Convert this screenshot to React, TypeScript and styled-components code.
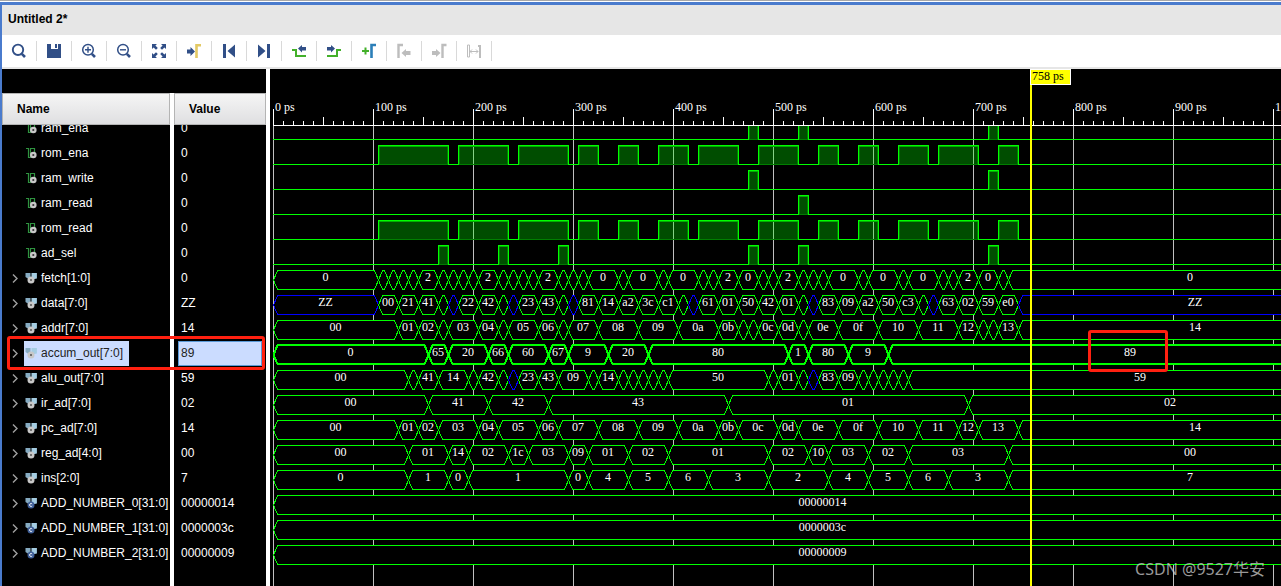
import React from "react";
import styled, { createGlobalStyle } from "styled-components";

const NAVY = "#314f87";
const LEAF = "#43b02a";
const MUTED = "#bdbdbd";
const WAVE = "#00ff00";
const HIGH_Z = "#0000ff";
/* Simulation end, in picoseconds; one picosecond is one pixel wide. */
const END = 1099;
const ORIGIN = 3;

const GlobalStyle = createGlobalStyle`
  * { box-sizing: border-box; }
  body { margin: 0; background: #fff; font: 12px "Liberation Sans", Arial, sans-serif; }
  button { font: inherit; background: none; border: 0; padding: 0; cursor: pointer; }
`;

const Frame = styled.div`
  display: flex;
  flex-direction: column;
  min-height: 100vh;
  border-top: 1px solid #a8a8a8;
  padding-top: 1px;
`;

const Window = styled.main`
  flex: 1;
  display: flex;
  flex-direction: column;
  border-top: 3px solid #4a7bcd;
  border-left: 2px solid #4a7bcd;
`;

const TitleBar = styled.h1`
  margin: 0;
  padding: 0 6px 2px;
  height: 30px;
  line-height: 28px;
  font-size: 12px;
  background: #e6e6e6;
  color: #000;
`;

const Toolbar = styled.div`
  display: flex;
  align-items: center;
  height: 34px;
  border-bottom: 2px solid #e6e6e6;
  background: #fff;
`;

const ToolButton = styled.button`
  display: flex;
  align-items: center;
  justify-content: center;
  width: 35px;
  height: 20px;
  border-right: 1px solid #d9d9d9;
`;

const Workspace = styled.div`
  position: relative;
  flex: 1;
  display: flex;
  background: #000;
  overflow: hidden;
`;

const SignalPane = styled.section`
  flex: 0 0 268px;
  display: flex;
  flex-direction: column;
  padding-top: 24px;
  border-right: 4px solid #fff;
`;

const SignalList = styled.div`
  flex: 1;
  background: linear-gradient(to right, #000 168px, #fff 168px, #fff 172px, #000 172px);
`;

const SignalTable = styled.table`
  width: 100%;
  table-layout: fixed;
  border-spacing: 0;
  color: #fff;
  td { padding: 0; }
`;

const NameColumn = styled.col`
  width: 172px;
`;

const HeadCell = styled.th<{ $gutter?: boolean }>`
  padding: 0;
  text-align: left;
  border-right: ${(p) => (p.$gutter ? "4px solid #fff" : "0")};
`;

const HeadLabel = styled.div<{ $indent: number }>`
  height: 32px;
  line-height: 30px;
  padding-left: ${(p) => p.$indent}px;
  border: 1px solid #b4b4b4;
  background: linear-gradient(#f5f5f5, #dfdfe1);
  color: #000;
`;

const Cell = styled.div<{ $cut?: boolean; $end?: number }>`
  display: flex;
  align-items: flex-end;
  height: ${(p) => (p.$cut ? 16 : 25)}px;
  padding-right: ${(p) => p.$end ?? 0}px;
  overflow: hidden;
`;

const Expander = styled.button`
  flex: none;
  display: flex;
  align-items: center;
  width: 12px;
  height: 25px;
  margin-left: 10px;
  padding-bottom: 2px;
`;

const NameChip = styled.span<{ $selected?: boolean }>`
  display: flex;
  align-items: center;
  gap: 2px;
  height: 25px;
  padding: 0 6px 2px 1px;
  white-space: nowrap;
  background: ${(p) => (p.$selected ? "#cbdcff" : "transparent")};
  color: ${(p) => (p.$selected ? "#222" : "#fff")};
  svg { flex: none; }
`;

const ValueBox = styled.span<{ $selected?: boolean }>`
  flex: 1;
  height: 25px;
  line-height: 23px;
  margin-left: 4px;
  padding-left: 2px;
  border: 1px solid ${(p) => (p.$selected ? "#5a9ad8" : "transparent")};
  background: ${(p) => (p.$selected ? "#cbdcff" : "transparent")};
  color: ${(p) => (p.$selected ? "#222" : "#fff")};
`;

const WavePane = styled.section`
  position: relative;
  flex: 1;
  min-width: 0;
  display: flex;
  flex-direction: column;
  overflow: hidden;
  text { font: 12px "Liberation Serif", "Times New Roman", serif; fill: #fff; }
`;

const Ruler = styled.svg`
  flex: none;
  display: block;
  width: 100%;
  height: 57px;
`;

const Lanes = styled.div`
  flex: 1;
  background: repeating-linear-gradient(to right, #c0c0c0 0, #c0c0c0 1px, transparent 1px, transparent 100px);
  background-position: ${ORIGIN}px 0;
  background-size: calc(100% - ${ORIGIN}px) 100%;
  background-repeat: no-repeat;
`;

const Lane = styled.div<{ $cut?: boolean }>`
  display: flex;
  align-items: flex-end;
  height: ${(p) => (p.$cut ? 15 : 25)}px;
  overflow: hidden;
`;

const LaneDrawing = styled.svg`
  flex: none;
  display: block;
  width: 100%;
  height: 25px;
`;

const CursorLine = styled.div`
  position: absolute;
  top: 0;
  bottom: 0;
  left: 760px;
  width: 2px;
  background: #ff0;
`;

const CursorLabel = styled.div`
  position: absolute;
  top: 0;
  left: 760px;
  width: 41px;
  height: 16px;
  line-height: 13px;
  padding-left: 1px;
  border: 1px solid #fff;
  background: #ff0;
  color: #000;
  font-family: "Liberation Serif", "Times New Roman", serif;
  white-space: nowrap;
`;

const Highlight = styled.div<{ $x: number; $y: number; $w: number; $h: number }>`
  position: absolute;
  left: ${(p) => p.$x}px;
  top: ${(p) => p.$y}px;
  width: ${(p) => p.$w}px;
  height: ${(p) => p.$h}px;
  border: 3px solid #ff2010;
  border-radius: 3px;
  pointer-events: none;
`;

const Watermark = styled.div`
  position: absolute;
  right: 16px;
  bottom: 5px;
  font: 16px/24px "Noto Sans", "Noto Sans CJK SC", sans-serif;
  color: rgba(205, 205, 205, 0.75);
`;

/* ---------- toolbar icons ---------- */

const Icon = ({ children }: { children: React.ReactNode }) => (
  <svg width="16" height="16" viewBox="0 0 16 16" fill="none" aria-hidden="true">
    {children}
  </svg>
);

const Lens = ({ small, children }: { small?: boolean; children?: React.ReactNode }) => (
  <Icon>
    <circle cx="7" cy="6.8" r={small ? 5.3 : 5.2} stroke={NAVY} strokeWidth={small ? 1.5 : 1.9} />
    <path d="M10.8 10.8L14 14" stroke={NAVY} strokeWidth="2.6" />
    {children}
  </Icon>
);

const tools: { name: string; icon: React.ReactNode; off?: boolean }[] = [
  { name: "Find", icon: <Lens /> },
  {
    name: "Save",
    icon: (
      <Icon>
        <path d="M1 1H5V6H12V1H15V15H1Z" fill={NAVY} />
        <path d="M9 1h2v4H9z" fill={NAVY} />
      </Icon>
    ),
  },
  { name: "Zoom in", icon: <Lens small><path d="M4 6.8H10M7 3.8V9.8" stroke={NAVY} strokeWidth="1.4" /></Lens> },
  { name: "Zoom out", icon: <Lens small><path d="M4 6.8H10" stroke={NAVY} strokeWidth="1.4" /></Lens> },
  {
    name: "Zoom fit",
    icon: (
      <Icon>
        <path d="M1 1H6L4.4 2.6 6.8 5 5 6.8 2.6 4.4 1 6ZM15 1V6L13.4 4.4 11 6.8 9.2 5 11.6 2.6 10 1ZM1 15V10L2.6 11.6 5 9.2 6.8 11 4.4 13.4 6 15ZM15 15H10L11.6 13.4 9.2 11 11 9.2 13.4 11.6 15 10Z" fill={NAVY} />
      </Icon>
    ),
  },
  {
    name: "Go to cursor",
    icon: (
      <Icon>
        <path d="M1 6.5H4.5V4L9 8.5 4.5 13V10.5H1Z" fill={NAVY} />
        <path d="M10.5 15V2.2H15" stroke="#e3c964" strokeWidth="2.6" />
      </Icon>
    ),
  },
  {
    name: "Go to start",
    icon: (
      <Icon>
        <path d="M2 1H5V15H2ZM14 1.5V14.5L6.5 8Z" fill={NAVY} />
      </Icon>
    ),
  },
  {
    name: "Go to end",
    icon: (
      <Icon>
        <path d="M11 1H14V15H11ZM2 1.5V14.5L9.5 8Z" fill={NAVY} />
      </Icon>
    ),
  },
  {
    name: "Previous transition",
    icon: (
      <Icon>
        <path d="M1 7H5V13H15" stroke={LEAF} strokeWidth="2" />
        <path d="M7 5.5L11 2V4H15V7.5H11V9.5Z" fill={NAVY} />
      </Icon>
    ),
  },
  {
    name: "Next transition",
    icon: (
      <Icon>
        <path d="M1 13H11V7H15" stroke={LEAF} strokeWidth="2" />
        <path d="M9 5.5L5 2V4H1V7.5H5V9.5Z" fill={NAVY} />
      </Icon>
    ),
  },
  {
    name: "Add marker",
    icon: (
      <Icon>
        <path d="M1 8H8M4.5 4.5V11.5" stroke={LEAF} strokeWidth="2" />
        <path d="M10.5 15V2H15" stroke="#2c7fb8" strokeWidth="2.6" />
      </Icon>
    ),
  },
  {
    name: "Previous marker",
    off: true,
    icon: (
      <Icon>
        <path d="M2.5 15V2H7" stroke={MUTED} strokeWidth="2.4" />
        <path d="M5.5 10L10 6V8H14.5V12H10V14Z" fill={MUTED} />
      </Icon>
    ),
  },
  {
    name: "Next marker",
    off: true,
    icon: (
      <Icon>
        <path d="M11.5 15V2H15.5" stroke={MUTED} strokeWidth="2.4" />
        <path d="M9.5 10L5 6V8H1V12H5V14Z" fill={MUTED} />
      </Icon>
    ),
  },
  {
    name: "Swap cursors",
    off: true,
    icon: (
      <Icon>
        <path d="M1.5 2H3.5V14H1.5ZM4 8.5H12M6 6.5L4 8.5 6 10.5M10 6.5L12 8.5 10 10.5" stroke={MUTED} />
        <path d="M12 2H15V15H13V4H12Z" fill={MUTED} />
      </Icon>
    ),
  },
];

/* ---------- signal icons ---------- */

const BitIcon = () => (
  <svg width="14" height="14" viewBox="0 0 14 14" fill="none" aria-hidden="true">
    <path d="M1 2.5H3.5V11.5H5.5V2.5H9.5V7" stroke="#2f9440" strokeWidth="1.2" />
    <path d="M3.5 3V12" stroke="#2f9440" />
    <circle cx="8.3" cy="9" r="3.3" fill="#c8c8c8" />
    <circle cx="8.3" cy="9" r="1.1" fill="#333" />
  </svg>
);

const BusIcon = ({ constant }: { constant?: boolean }) => (
  <svg width="14" height="14" viewBox="0 0 14 14" fill="none" aria-hidden="true">
    <path d="M.5 2H5.5V8H3.5L.5 6Z" fill="#86abc2" />
    <path d="M6.5 2H11.9V7.5L9.5 8H6.5Z" fill="#a5cde2" />
    <circle cx="6" cy="9" r="3.5" fill={constant ? "#3f5f98" : "#c8c8c8"} />
    {constant ? (
      <path d="M7.2 8A1.5 1.5 0 1 0 7.2 10" stroke="#fff" strokeWidth=".9" />
    ) : (
      <circle cx="6" cy="9" r="1" fill="#555" />
    )}
  </svg>
);

/* ---------- signals ---------- */

type Signal = {
  name: string;
  value: string;
  pulses?: [number, number][];
  /* "start=label" tokens; "." is too narrow for a label, "*" is high impedance. */
  bus?: string;
  constant?: boolean;
  selected?: boolean;
};

const romPulses: [number, number][] = [
  [105, 175], [185, 235], [245, 295], [305, 325], [345, 365], [385, 415], [425, 465],
  [485, 525], [545, 565], [585, 605], [625, 655], [665, 705], [725, 745],
];

const signals: Signal[] = [
  { name: "ram_ena", value: "0", pulses: [[475, 485], [525, 535], [715, 725]] },
  { name: "rom_ena", value: "0", pulses: romPulses },
  { name: "ram_write", value: "0", pulses: [[475, 485], [715, 725]] },
  { name: "ram_read", value: "0", pulses: [[525, 535]] },
  { name: "rom_read", value: "0", pulses: romPulses },
  { name: "ad_sel", value: "0", pulses: [[165, 175], [225, 235], [285, 295], [475, 485], [525, 535], [715, 725]] },
  {
    name: "fetch[1:0]",
    value: "0",
    bus: "0=0 105=. 115=. 125=. 135=. 145=2 165=. 175=. 185=. 195=. 205=2 225=. 235=. 245=. 255=. 265=2 285=. 295=. 305=. 315=0 345=. 355=0 385=. 395=0 425=. 435=. 445=2 465=0 485=. 495=. 505=2 525=. 535=. 545=. 555=0 585=. 595=0 625=. 635=0 665=. 675=. 685=2 705=0 725=. 735=0",
  },
  {
    name: "data[7:0]",
    value: "ZZ",
    bus: "0=ZZ 105=00 125=21 145=41 165=. 175=* 185=22 205=42 225=. 235=* 245=23 265=43 285=. 295=* 305=81 325=14 345=a2 365=3c 385=c1 405=. 415=* 425=61 445=01 465=50 485=42 505=01 525=. 535=* 545=83 565=09 585=a2 605=50 625=c3 645=. 655=* 665=63 685=02 705=59 725=e0 745=ZZ",
  },
  {
    name: "addr[7:0]",
    value: "14",
    bus: "0=00 125=01 145=02 165=. 175=03 205=04 225=. 235=05 265=06 285=. 295=07 325=08 365=09 405=0a 445=0b 465=. 475=. 485=0c 505=0d 525=. 535=0e 565=0f 605=10 645=11 685=12 705=. 715=. 725=13 745=14",
  },
  {
    name: "accum_out[7:0]",
    value: "89",
    selected: true,
    bus: "0=0 155=65 175=20 215=66 235=60 275=67 295=9 335=20 375=80 515=1 535=80 575=9 615=89",
  },
  {
    name: "alu_out[7:0]",
    value: "59",
    bus: "0=00 135=. 145=41 165=14 195=. 205=42 225=. 235=* 245=23 265=43 285=09 315=. 325=14 345=. 355=. 365=. 375=. 385=. 395=50 495=. 505=01 525=. 535=* 545=83 565=09 585=. 595=. 605=. 615=. 625=. 635=59",
  },
  { name: "ir_ad[7:0]", value: "02", bus: "0=00 155=41 215=42 275=43 455=01 695=02" },
  {
    name: "pc_ad[7:0]",
    value: "14",
    bus: "0=00 125=01 145=02 165=03 205=04 225=05 265=06 285=07 325=08 365=09 405=0a 445=0b 465=0c 505=0d 525=0e 565=0f 605=10 645=11 685=12 705=13 745=14",
  },
  {
    name: "reg_ad[4:0]",
    value: "00",
    bus: "0=00 135=01 175=14 195=02 235=1c 255=03 295=09 315=01 355=02 395=01 495=02 535=10 555=03 595=02 635=03 735=00",
  },
  {
    name: "ins[2:0]",
    value: "7",
    bus: "0=0 135=1 175=0 195=1 295=0 315=4 355=5 395=6 435=3 495=2 555=4 595=5 635=6 675=3 735=7",
  },
  { name: "ADD_NUMBER_0[31:0]", value: "00000014", constant: true, bus: "0=00000014" },
  { name: "ADD_NUMBER_1[31:0]", value: "0000003c", constant: true, bus: "0=0000003c" },
  { name: "ADD_NUMBER_2[31:0]", value: "00000009", constant: true, bus: "0=00000009" },
];

const BitWave = ({ pulses }: { pulses: [number, number][] }) => {
  const outline = pulses.map(([a, b]) => `H${a + 0.5}V4.5H${b + 0.5}V23.5`).join("");
  return (
    <g shapeRendering="crispEdges" fill="none">
      {pulses.map(([a, b]) => (
        <rect key={a} x={a} y="4" width={b - a + 1} height="20" fill="rgba(0,255,0,0.3)" />
      ))}
      <path d={`M0 23.5${outline}H${END}`} stroke={WAVE} />
      {pulses.map(([a, b]) => (
        <g key={a}>
          <path d={`M${a + 1.5} 5V23M${b - 0.5} 5V23M${a + 1} 23.5H${b}`} stroke="#008000" />
          <path d={`M${a + 1} 5.5H${b}`} stroke="#00b000" />
        </g>
      ))}
    </g>
  );
};

const BusWave = ({ bus, bold }: { bus: string; bold?: boolean }) => {
  const items = bus.split(" ").map((token) => token.split("="));
  const top = bold ? 4 : 4.5;
  const bottom = bold ? 23 : 23.5;
  const segments = items.map(([start, label], i) => {
    const a = Number(start);
    const b = i + 1 < items.length ? Number(items[i + 1][0]) : END;
    return { a, b, label, color: label === "*" || label === "ZZ" ? HIGH_Z : WAVE };
  });
  return (
    <>
      {segments.map(({ a, b, color }) => (
        <path
          key={a}
          d={`M${a + 0.5} 14L${a + 4.5} ${top}H${b - 3.5}L${b + 0.5} 14L${b - 3.5} ${bottom}H${a + 4.5}Z`}
          fill="#000"
          stroke={color}
          strokeWidth={bold ? 2 : 1}
          shapeRendering="crispEdges"
        />
      ))}
      {segments.map(({ a, b, label }) =>
        label === "." || label === "*" ? null : (
          <text key={a} x={(a + b) / 2} y="15" textAnchor="middle">
            {label}
          </text>
        ),
      )}
    </>
  );
};

const TimeRuler = () => {
  const ticks = Array.from({ length: 111 }, (_, i) => i * 10);
  return (
    <Ruler role="img" aria-label="Time ruler">
      <g transform={`translate(${ORIGIN} 0)`}>
        <path
          d={`M0 56.5H2000${ticks.map((t) => `M${t + 0.5} ${t % 100 === 0 ? 40 : t % 50 === 0 ? 48 : 52}V57`).join("")}`}
          stroke="#fff"
          shapeRendering="crispEdges"
        />
        {ticks.filter((t) => t % 100 === 0).map((t) => (
          <text key={t} x={t + 2} y="42">{`${t} ps`}</text>
        ))}
      </g>
    </Ruler>
  );
};

export default function App() {
  return (
    <Frame>
      <GlobalStyle />
      <Window>
        <TitleBar>Untitled 2*</TitleBar>
        <Toolbar role="toolbar" aria-label="Waveform tools">
          {tools.map((tool) => (
            <ToolButton key={tool.name} type="button" aria-label={tool.name} disabled={tool.off}>
              {tool.icon}
            </ToolButton>
          ))}
        </Toolbar>
        <Workspace>
          <SignalPane>
            <SignalList>
              <SignalTable>
                <colgroup>
                  <NameColumn />
                  <col />
                </colgroup>
                <thead>
                  <tr>
                    <HeadCell $gutter><HeadLabel $indent={14}>Name</HeadLabel></HeadCell>
                    <HeadCell><HeadLabel $indent={14}>Value</HeadLabel></HeadCell>
                  </tr>
                </thead>
                <tbody>
                  {signals.map((s, i) => (
                    <tr key={s.name}>
                      <td>
                        <Cell $cut={i === 0} $end={4}>
                          <Expander as={s.bus ? "button" : "span"} aria-label={s.bus ? `Expand ${s.name}` : undefined}>
                            {s.bus && (
                              <svg width="8" height="12" viewBox="0 0 8 12" fill="none" aria-hidden="true">
                                <path d="M1 2.5L5 6.5 1 10.5" stroke="#a0a0a0" strokeWidth="1.4" />
                              </svg>
                            )}
                          </Expander>
                          <NameChip $selected={s.selected}>
                            {s.bus ? <BusIcon constant={s.constant} /> : <BitIcon />}
                            {s.name}
                          </NameChip>
                        </Cell>
                      </td>
                      <td>
                        <Cell $cut={i === 0} $end={4}>
                          <ValueBox $selected={s.selected}>{s.value}</ValueBox>
                        </Cell>
                      </td>
                    </tr>
                  ))}
                </tbody>
              </SignalTable>
            </SignalList>
          </SignalPane>
          <WavePane>
            <TimeRuler />
            <Lanes>
              {signals.map((s, i) => (
                <Lane key={s.name} $cut={i === 0}>
                  <LaneDrawing role="img" aria-label={`${s.name} waveform`}>
                    <g transform={`translate(${ORIGIN} 0)`}>
                      {s.bus ? <BusWave bus={s.bus} bold={s.selected} /> : <BitWave pulses={s.pulses ?? []} />}
                    </g>
                  </LaneDrawing>
                </Lane>
              ))}
            </Lanes>
            <CursorLine />
            <CursorLabel>758 ps</CursorLabel>
            <Highlight $x={818} $y={261} $w={80} $h={42} />
          </WavePane>
          <Highlight $x={5} $y={267} $w={258} $h={34} />
          <Watermark>CSDN @9527华安</Watermark>
        </Workspace>
      </Window>
    </Frame>
  );
}
